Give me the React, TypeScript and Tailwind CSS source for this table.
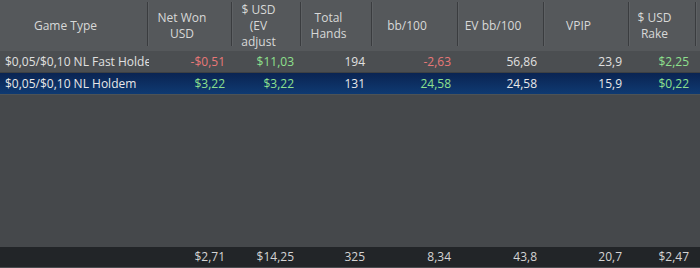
import React from "react";

interface Row {
  game: string;
  net: string;
  ev: string;
  hands: string;
  bb: string;
  evbb: string;
  vpip: string;
  rake: string;
  selected?: boolean;
}

const cols = "grid grid-cols-[149px_84px_69px_71px_86px_86px_85px_67px_1fr]";

// header labels, one entry per wrapped line
const headers: string[][] = [
  ["Game Type"],
  ["Net Won", "USD"],
  ["$ USD", "(EV", "adjust"],
  ["Total", "Hands"],
  ["bb/100"],
  ["EV bb/100"],
  ["VPIP"],
  ["$ USD", "Rake"],
];

const rows: Row[] = [
  { game: "$0,05/$0,10 NL Fast Holdem", net: "-$0,51", ev: "$11,03", hands: "194", bb: "-2,63", evbb: "56,86", vpip: "23,9", rake: "$2,25" },
  { game: "$0,05/$0,10 NL Holdem", net: "$3,22", ev: "$3,22", hands: "131", bb: "24,58", evbb: "24,58", vpip: "15,9", rake: "$0,22", selected: true },
];

const tone = (v: string) => (v.startsWith("-") ? "text-[#e87878]" : "text-[#8ee08e]");

const Cell: React.FC<{ children: React.ReactNode; className?: string }> = ({ children, className }) => (
  <div className={`flex items-center justify-end pr-[8px] whitespace-nowrap overflow-hidden ${className || ""}`}>{children}</div>
);

const App: React.FC = () => {
  return (
    <div
      className="w-[700px] h-[268px] flex flex-col bg-[#45484b] text-[12px] text-[#e0e0e0] overflow-hidden"
      style={{ fontFamily: '"Open Sans", "Noto Sans", sans-serif' }}
    >
      {/* Header */}
      <div className={`${cols} h-[51px] bg-[#55585b] text-[#d8d8d8] leading-[16px]`}>
        {headers.map((lines) => (
          <div key={lines.join(" ")} className="flex items-stretch">
            <div className="flex-1 flex flex-col items-center justify-center pr-[18px] pl-[2px] overflow-hidden whitespace-nowrap">
              {lines.map((l) => (
                <span key={l}>{l}</span>
              ))}
            </div>
            <div className="w-[2px] mt-[2px] mb-[5px] bg-[#3a3c3f] border-r border-[#5e6164]" />
          </div>
        ))}
        <div />
      </div>

      {/* Rows */}
      {rows.map((r) => (
        <div
          key={r.game}
          className={`${cols} h-[22px] border-b ${
            r.selected ? "bg-gradient-to-b from-[#0a2452] to-[#0f3a72] text-[#e8e8e8] border-[#4d5356]" : "bg-[#4b4e51] border-[#3d4043]"
          }`}
        >
          <div className="flex items-center pl-[5px] whitespace-nowrap overflow-hidden">{r.game}</div>
          <Cell className={tone(r.net)}>{r.net}</Cell>
          <Cell className={tone(r.ev)}>{r.ev}</Cell>
          <Cell>{r.hands}</Cell>
          <Cell className={tone(r.bb)}>{r.bb}</Cell>
          <Cell>{r.evbb}</Cell>
          <Cell>{r.vpip}</Cell>
          <Cell className={tone(r.rake)}>{r.rake}</Cell>
          <div />
        </div>
      ))}

      <div className="flex-1" />

      {/* Totals */}
      <div className={`${cols} h-[21px] bg-[#222528] text-[#d4d4d4] border-b border-[#4a4d50]`}>
        <div />
        <Cell>$2,71</Cell>
        <Cell>$14,25</Cell>
        <Cell>325</Cell>
        <Cell>8,34</Cell>
        <Cell>43,8</Cell>
        <Cell>20,7</Cell>
        <Cell>$2,47</Cell>
        <div />
      </div>
    </div>
  );
};

export default App;
